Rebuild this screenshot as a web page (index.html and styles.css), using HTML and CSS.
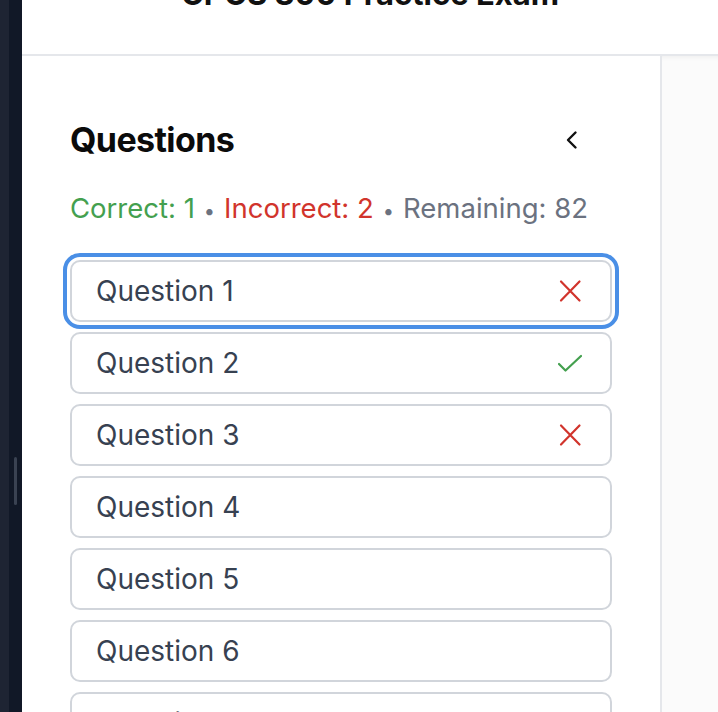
FILE: index.html
```html
<!DOCTYPE html>
<html lang="en">
<head>
<meta charset="utf-8">
<title>CPCS 300 Practice Exam</title>
<link rel="stylesheet" href="styles.css">
</head>
<body>
<div class="app">
  <div class="rail">
    <div class="rail-edge"></div>
    <div class="rail-main"><div class="thumb"></div></div>
  </div>
  <div class="page">
    <header class="topbar">
      <button class="back" aria-label="Back">
        <svg width="24" height="24" viewBox="0 0 24 24" fill="none" stroke="#111" stroke-width="2" stroke-linecap="round" stroke-linejoin="round"><path d="M20 12H4M10 6l-6 6 6 6"/></svg>
      </button>
      <h1 class="title">CPCS 300 Practice Exam</h1>
    </header>
    <div class="body">
      <aside class="sidebar">
        <div class="side-head">
          <h2 class="side-title">Questions</h2>
          <button class="collapse" aria-label="Collapse">
            <svg width="24" height="24" viewBox="0 0 24 24" fill="none" stroke="#111" stroke-width="2.4" stroke-linecap="round" stroke-linejoin="round"><path d="M15.5 4.5L8 12l7.5 7.5"/></svg>
          </button>
        </div>
        <p class="stats">
          <span class="ok">Correct: 1</span><span class="dot">•</span><span class="bad">Incorrect: 2</span><span class="dot">•</span><span class="rem">Remaining: 82</span>
        </p>
        <ul class="qlist">
          <li><button class="q focused"><span>Question 1</span>
            <svg class="ic" width="24" height="24" viewBox="0 0 24 24" fill="none" stroke="#d1342c" stroke-width="2.2" stroke-linecap="round"><path d="M3 2.5l18.5 19M21.5 2.5L3 21.5"/></svg></button></li>
          <li><button class="q"><span>Question 2</span>
            <svg class="ic" width="24" height="24" viewBox="0 0 24 24" fill="none" stroke="#44a04f" stroke-width="2.2" stroke-linecap="round" stroke-linejoin="round"><path d="M1 13l6.5 6.5L23 5"/></svg></button></li>
          <li><button class="q"><span>Question 3</span>
            <svg class="ic" width="24" height="24" viewBox="0 0 24 24" fill="none" stroke="#d1342c" stroke-width="2.2" stroke-linecap="round"><path d="M3 2.5l18.5 19M21.5 2.5L3 21.5"/></svg></button></li>
          <li><button class="q"><span>Question 4</span></button></li>
          <li><button class="q"><span>Question 5</span></button></li>
          <li><button class="q"><span>Question 6</span></button></li>
          <li><button class="q"><span>Question 7</span></button></li>
        </ul>
      </aside>
      <main class="main"></main>
    </div>
  </div>
</div>
</body>
</html>
```
FILE: styles.css
```css
* { box-sizing: border-box; }
html, body { margin: 0; padding: 0; height: 100%; overflow: hidden; background: #fff; }
body { font-family: Inter, "Noto Sans", "Liberation Sans", sans-serif; }

.app { display: flex; height: 712px; }

.rail { display: flex; width: 22px; flex: none; }
.rail-edge { width: 9px; background: #1e2433; }
.rail-main { width: 13px; background: #111827; padding-top: 457px; padding-left: 5px; }
.thumb { width: 3px; height: 48px; border-radius: 2px; background: #3a4252; }

.page { flex: 1; display: flex; flex-direction: column; min-width: 0; }

.topbar {
  height: 56px; flex: none; border-bottom: 2px solid #e5e7eb;
  display: flex; justify-content: center; align-items: flex-start; position: relative; background: #fff;
}
.back {
  position: absolute; left: 64px; top: -22px; border: 0; background: none; padding: 0;
}
.title {
  margin: -22px 0 0; font-size: 31px; line-height: 31px; font-weight: 700; color: #111; white-space: nowrap;
}

.body { flex: 1; display: flex; min-height: 0; }

.sidebar {
  width: 640px; flex: none; border-right: 2px solid #e5e7eb; padding: 64px 48px 0 48px; overflow: hidden;
}
.side-head { display: flex; justify-content: space-between; align-items: center; height: 40px; }
.side-title { margin: 0; font-size: 34px; line-height: 40px; font-weight: 700; color: #0b0b0b; letter-spacing: -0.6px; }
.collapse { border: 0; background: none; padding: 0; margin-right: 28px; display: flex; }

.stats { margin: 32px 0 0; font-size: 27.5px; line-height: 32px; white-space: nowrap; }
.ok { color: #44a04f; }
.bad { color: #d1342c; }
.rem { color: #6b7280; }
.dot { color: #6b7280; margin: 0 9px; font-size: 20px; }

.qlist { list-style: none; margin: 33px 0 0; padding: 0; display: flex; flex-direction: column; gap: 10px; }
.q {
  width: 100%; height: 62px; border: 2px solid #d1d5db; border-radius: 10px; background: #fff;
  display: flex; align-items: center; justify-content: space-between; padding: 0 28px 0 24px;
  font-family: inherit; font-size: 28px; color: #374151; text-align: left;
}
.q.focused { outline: 4px solid #4a8fe6; outline-offset: 3px; }
.ic { flex: none; }

.main { flex: 1; background: #fbfbfb; box-shadow: inset 0 6px 6px -6px rgba(0,0,0,0.08); }
```
